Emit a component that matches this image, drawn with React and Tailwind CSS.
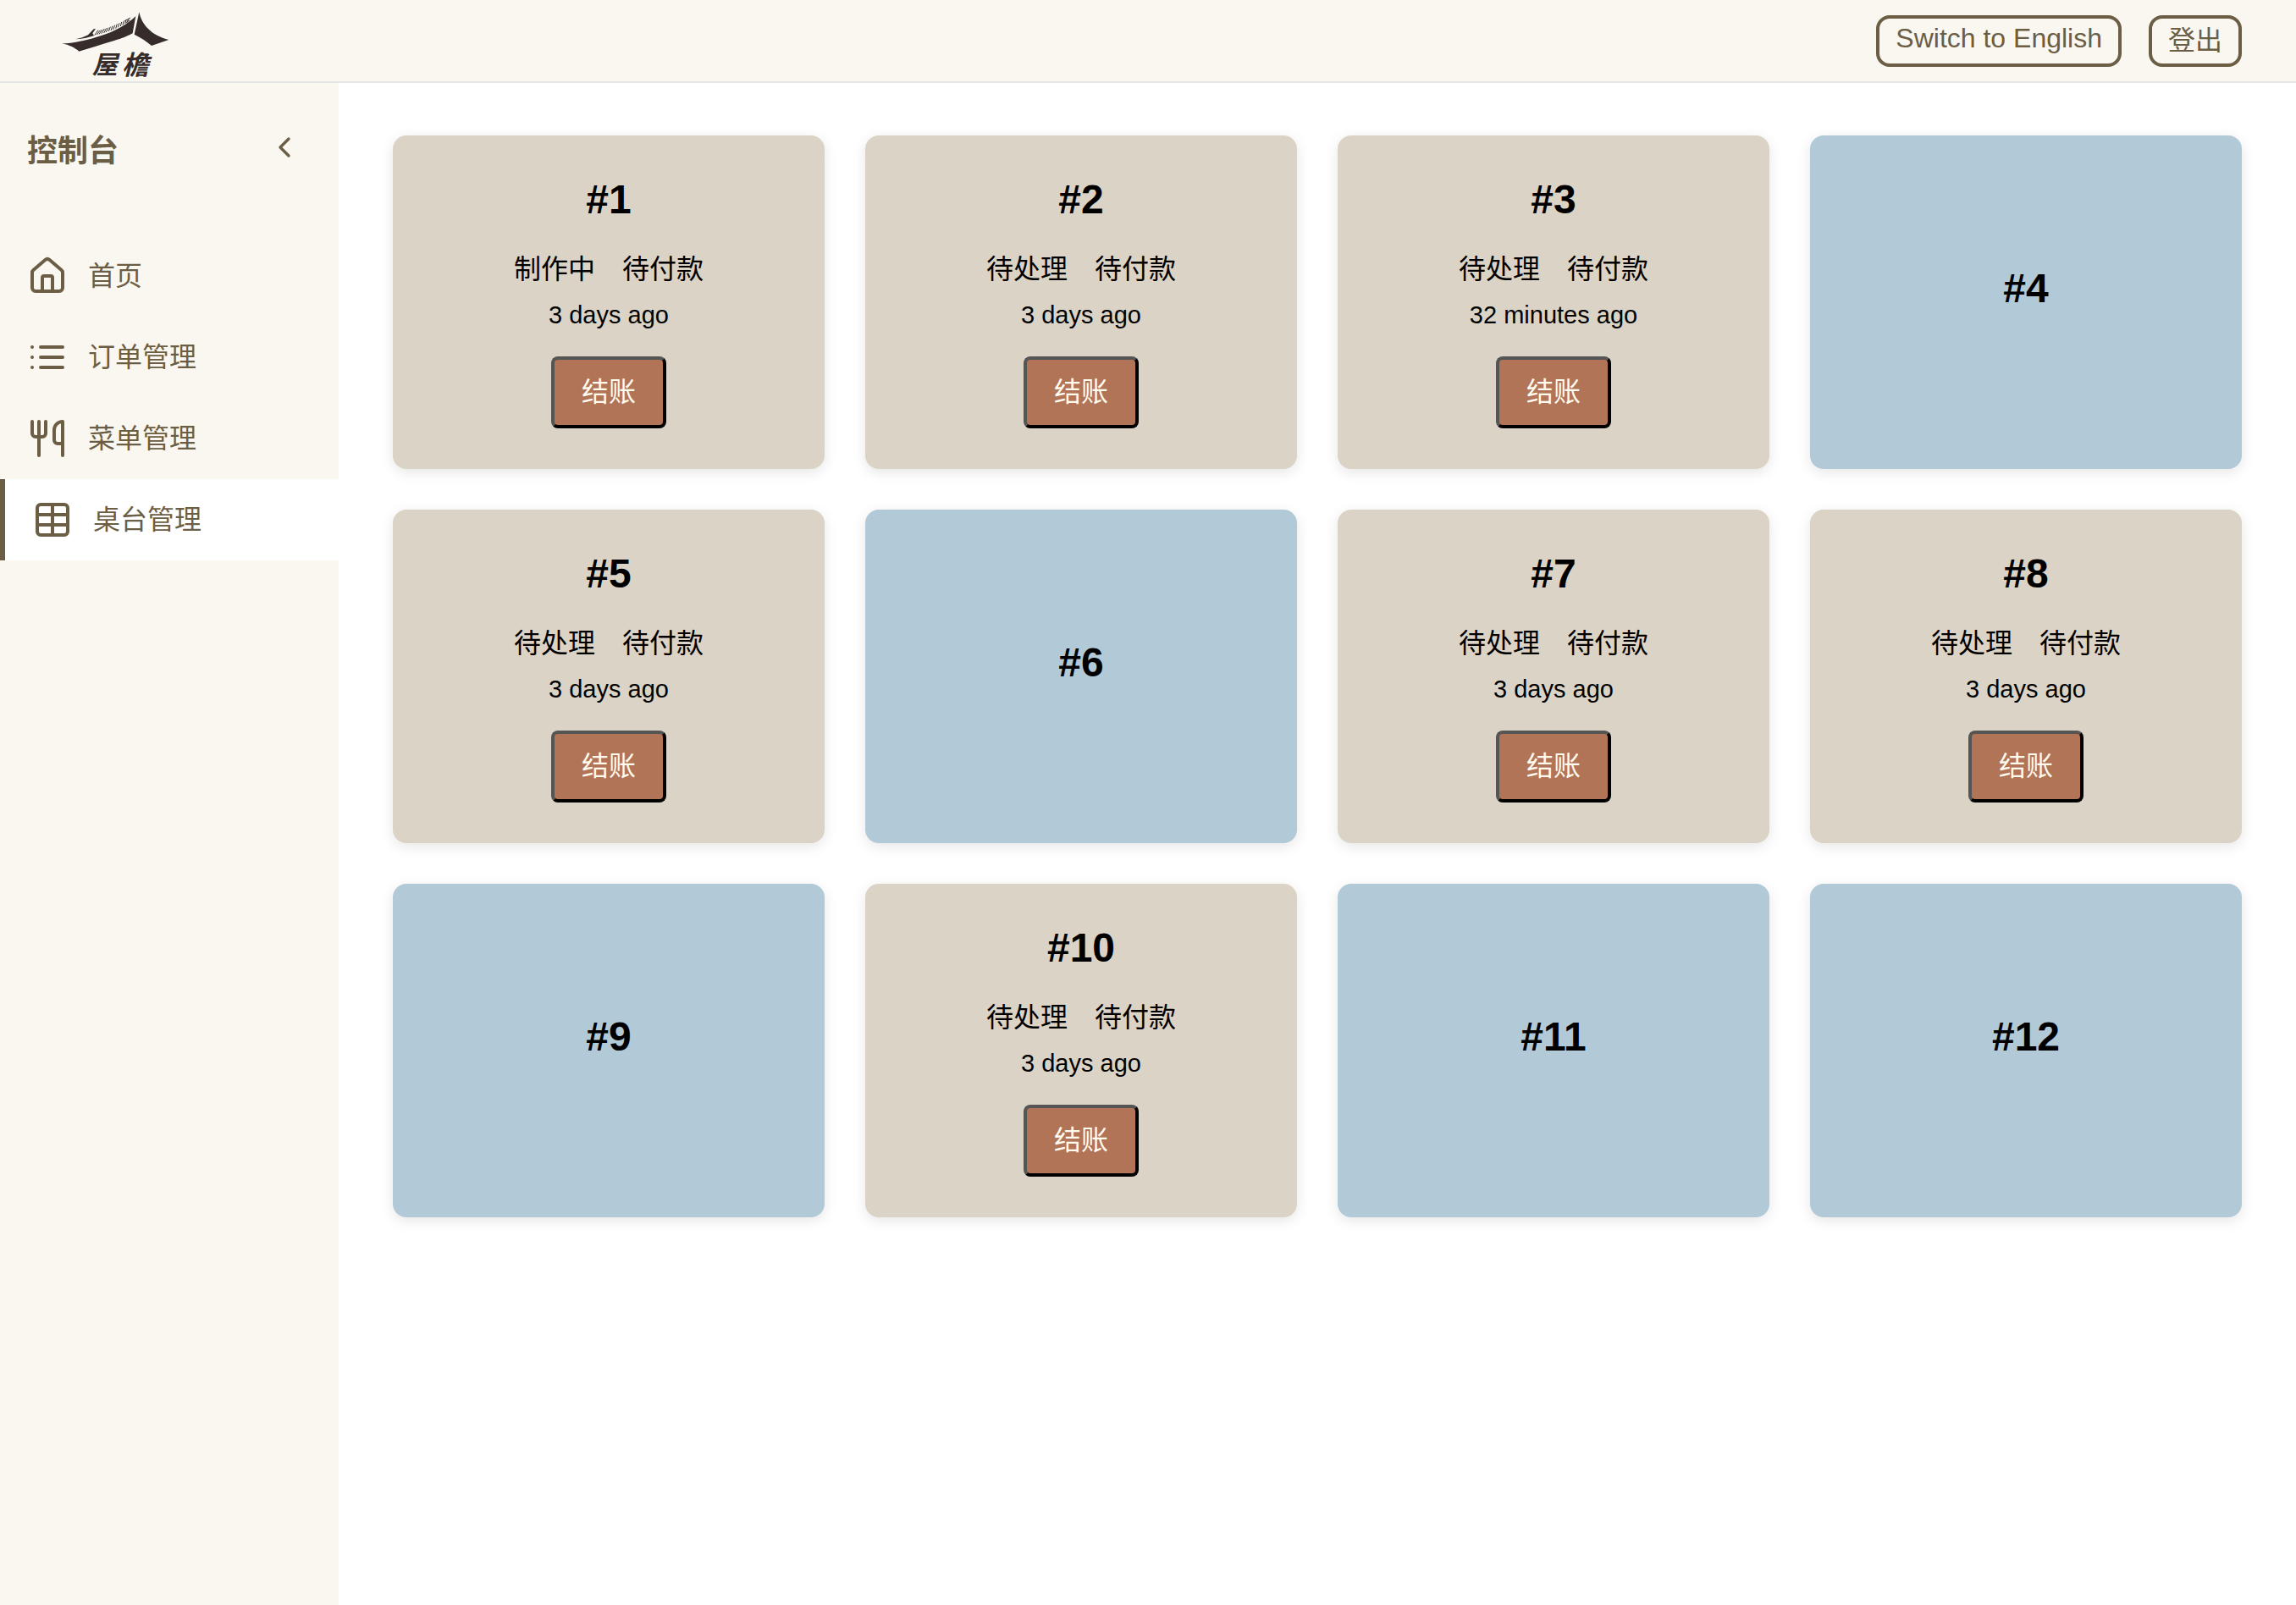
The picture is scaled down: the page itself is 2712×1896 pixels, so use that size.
import React from "react";
import { House, Utensils, ChevronLeft } from "lucide-react";

const iconProps = {
  viewBox: "0 0 24 24",
  fill: "none",
  stroke: "currentColor",
  strokeWidth: 2,
  strokeLinecap: "round",
  strokeLinejoin: "round",
  "aria-hidden": true,
};

function ListIcon({ className }) {
  return (
    <svg {...iconProps} className={className}>
      <path d="M8 6h13M8 12h13M8 18h13M3 6h.01M3 12h.01M3 18h.01" />
    </svg>
  );
}

function TableIcon({ className }) {
  return (
    <svg {...iconProps} className={className}>
      <path d="M12 3v18M3 9h18M3 15h18" />
      <rect width="18" height="18" x="3" y="3" rx="2" />
    </svg>
  );
}

const navItems = [
  { label: "首页", Icon: House },
  { label: "订单管理", Icon: ListIcon },
  { label: "菜单管理", Icon: Utensils },
  { label: "桌台管理", Icon: TableIcon, active: true },
];

const tables = [
  { id: 1, status: "制作中", time: "3 days ago" },
  { id: 2, status: "待处理", time: "3 days ago" },
  { id: 3, status: "待处理", time: "32 minutes ago" },
  { id: 4 },
  { id: 5, status: "待处理", time: "3 days ago" },
  { id: 6 },
  { id: 7, status: "待处理", time: "3 days ago" },
  { id: 8, status: "待处理", time: "3 days ago" },
  { id: 9 },
  { id: 10, status: "待处理", time: "3 days ago" },
  { id: 11 },
  { id: 12 },
];

function Logo() {
  return (
    <svg viewBox="0 0 450 270" className="h-[90px] w-[150px]" fill="#352c2b" role="img" aria-label="屋檐">
      <path d="M39 124C54 124 72 122 89 119C130 112 165 102 197 90C235 76 272 55 301 27L290 88C270 100 240 110 212 118C175 129 140 141 100 152C86 140 66 129 39 124Z" />
      <path d="M313 13C318 36 327 53 342 69C363 91 388 103 418 111L357 132C338 116 319 103 296 92Z" />
      <path d="M88 109C105 106 119 101 132 94L152 73L159 72L148 88L153 96C139 101 115 108 88 109Z" />
      <path
        fill="none"
        stroke="#352c2b"
        strokeWidth="3"
        d="M155 95L168 77M163 93L175 77M171 91L182 75M179 89L190 72M188 87L197 70M196 84L204 68M205 81L211 65M213 78L219 62M221 75L227 59M230 71L235 55M238 67L243 52M247 63L251 48M255 59L259 44M263 54L267 41M270 50L275 37"
      />
      <path fill="none" stroke="#352c2b" strokeWidth="3" d="M262 44L282 33M267 50L280 41" />
      <text
        x="146"
        y="232"
        fontSize="90"
        fontWeight="700"
        fontStyle="italic"
        fontFamily="'Noto Sans CJK TC', sans-serif"
      >
        屋
      </text>
      <text
        x="252"
        y="234"
        fontSize="94"
        fontWeight="700"
        fontStyle="italic"
        fontFamily="'Noto Sans CJK TC', sans-serif"
      >
        檐
      </text>
    </svg>
  );
}

function Header() {
  const button =
    "flex items-start rounded-2xl border-4 border-[#6b5e45] px-[19px] py-1 text-[32px]";
  return (
    <header className="flex h-[98px] items-start justify-between border-b-2 border-[#e5e5e5] bg-[#faf7f0] pl-[60px] pr-16">
      <a href="#home" className="mt-[10px] h-[86px]">
        <Logo />
      </a>
      <div className="mt-[18px] flex gap-8">
        <button type="button" className={button + " leading-[38px]"}>
          Switch to English
        </button>
        <button type="button" className={button + " leading-[45px]"}>
          登出
        </button>
      </div>
    </header>
  );
}

function Sidebar() {
  return (
    <aside className="w-[400px] shrink-0 bg-[#faf7f0]">
      <div className="flex h-[180px] items-start justify-between pl-8 pr-11 pt-14">
        <h2 className="text-[36px] leading-[50px] font-bold">控制台</h2>
        <button type="button" aria-label="收起">
          <ChevronLeft className="size-10" />
        </button>
      </div>
      <nav>
        {navItems.map(({ label, Icon, active }) => (
          <a
            key={label}
            href={"#" + label}
            className={
              "flex h-24 items-center gap-6 px-8 text-[32px] leading-[48px] " +
              (active ? "border-l-6 border-[#6b5e45] bg-white" : "")
            }
          >
            <Icon className="size-12" />
            {label}
          </a>
        ))}
      </nav>
    </aside>
  );
}

function TableCard({ id, status, time }) {
  return (
    <article
      className={
        "flex min-h-[394px] flex-col items-center rounded-2xl p-12 text-black shadow-[0_4px_16px_rgba(0,0,0,0.1)] " +
        (status ? "bg-[#dbd3c5]" : "bg-[#b2c9d7] justify-center pb-20")
      }
    >
      <h3 className="text-[48px] leading-[56px] font-bold">#{id}</h3>
      {status && (
        <>
          <p className="mt-8 flex gap-8 text-[32px] leading-[44px]">
            <span>{status}</span>
            <span>待付款</span>
          </p>
          <p className="mt-4 text-[29px] leading-[33px]">{time}</p>
          <button
            type="button"
            className="mt-8 rounded-lg border-4 border-t-[#555555] border-l-[#555555] border-r-black border-b-black bg-[#b17457] px-8 py-4 text-[32px] leading-[45px] text-[#fffbef]"
          >
            结账
          </button>
        </>
      )}
    </article>
  );
}

export default function App() {
  return (
    <div className="flex min-h-screen flex-col bg-white text-[#6b5e45] font-['Liberation_Sans','Noto_Sans_CJK_SC',sans-serif]">
      <Header />
      <div className="flex grow">
        <Sidebar />
        <main className="grid grow grid-cols-4 content-start gap-12 px-16 pt-[62px] pb-16">
          {tables.map((t) => (
            <TableCard key={t.id} {...t} />
          ))}
        </main>
      </div>
    </div>
  );
}
